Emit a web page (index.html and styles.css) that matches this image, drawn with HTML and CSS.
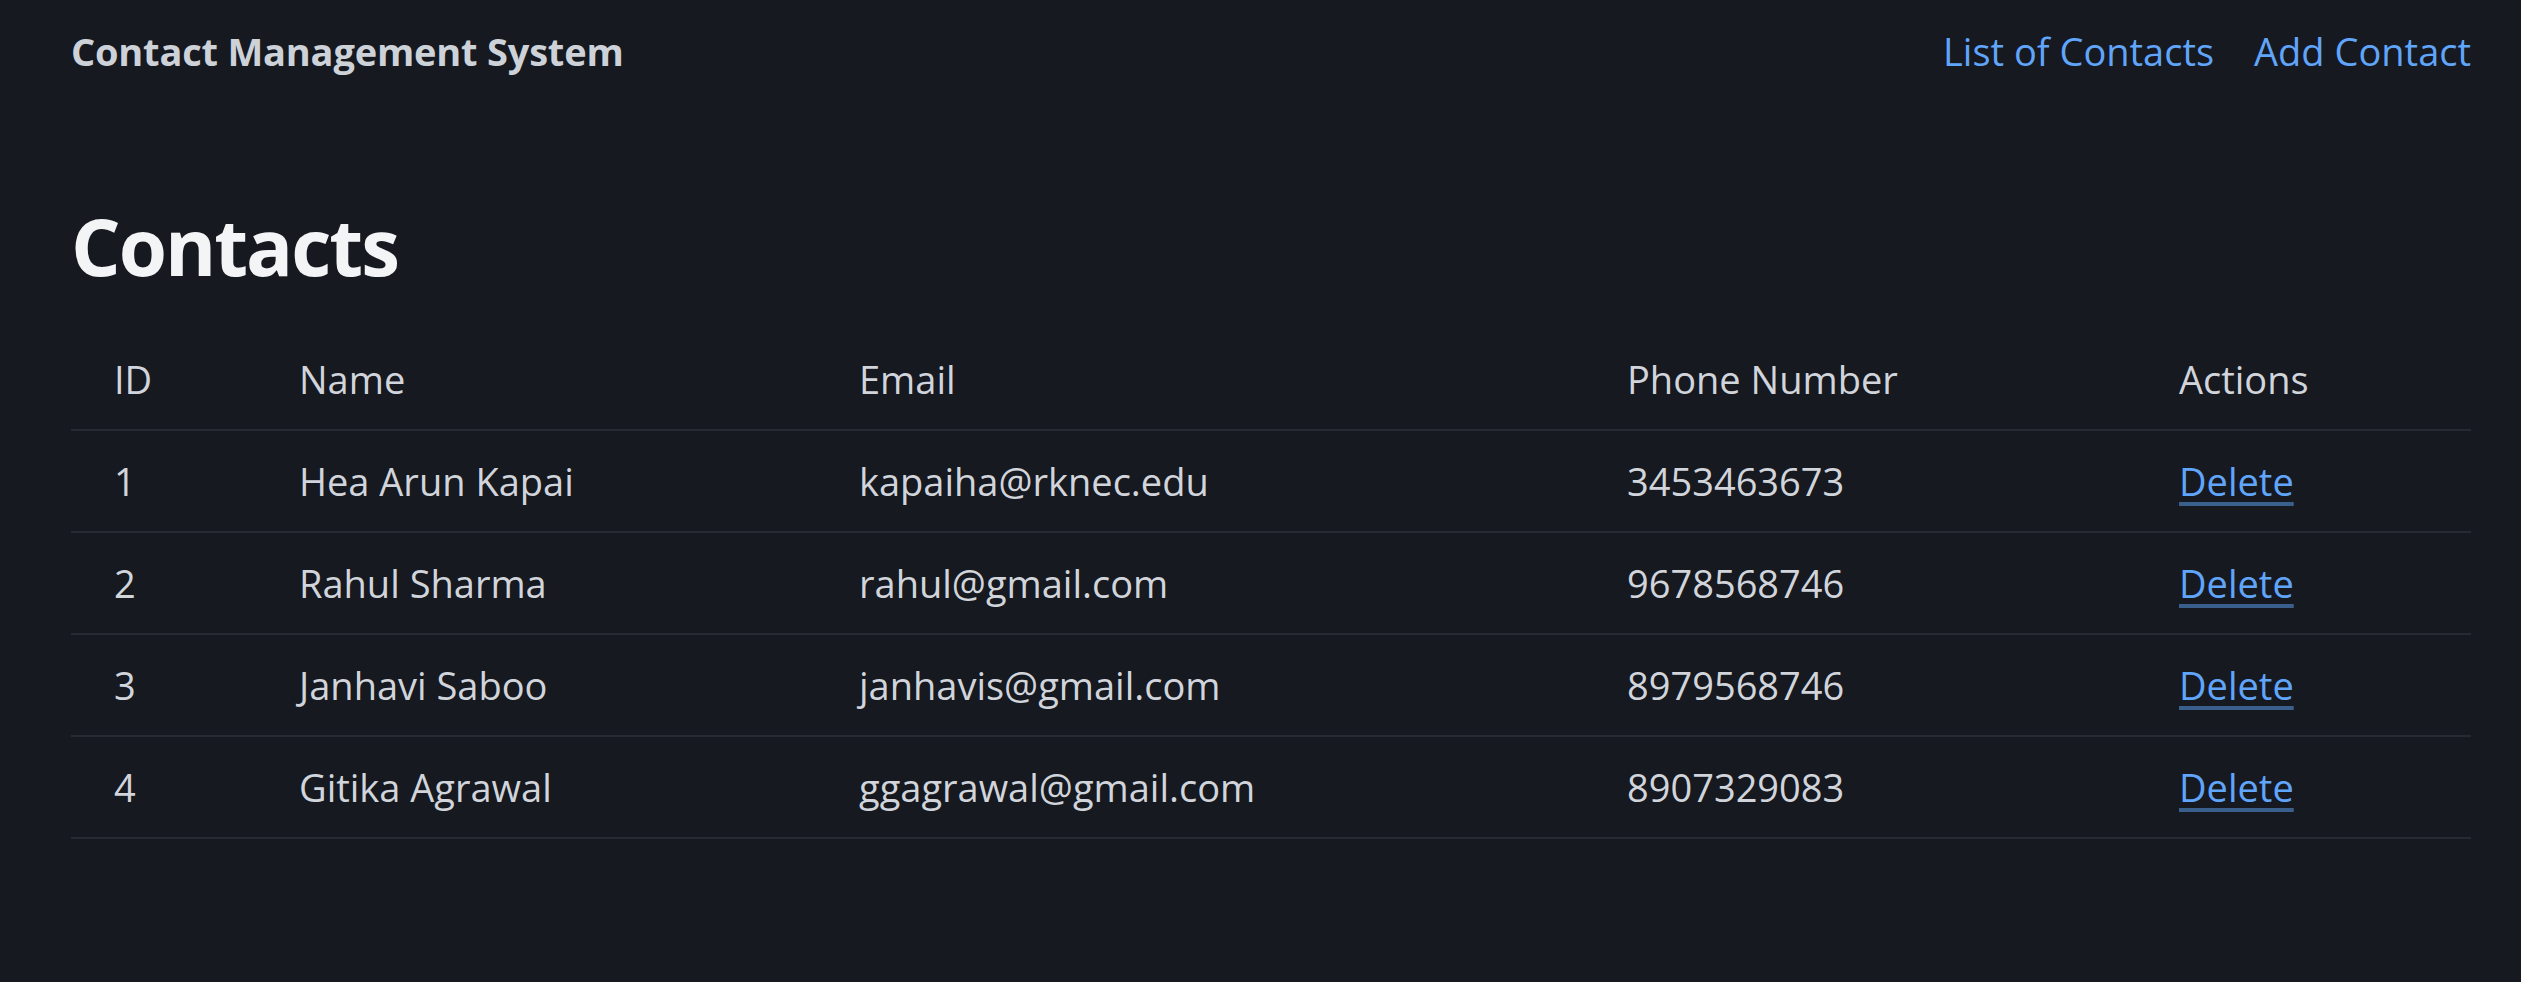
FILE: index.html
```html
<!DOCTYPE html>
<html lang="en">
<head>
<meta charset="utf-8">
<title>Contact Management System</title>
<link rel="stylesheet" href="styles.css">
</head>
<body>
<nav class="navbar">
  <a class="brand" href="#">Contact Management System</a>
  <div class="nav-links">
    <a class="nav-link" href="#">List of Contacts</a>
    <a class="nav-link" href="#">Add Contact</a>
  </div>
</nav>
<main class="container">
  <h1 class="page-title">Contacts</h1>
  <table class="contacts-table">
    <colgroup>
      <col class="col-id">
      <col class="col-name">
      <col class="col-email">
      <col class="col-phone">
      <col class="col-actions">
    </colgroup>
    <thead>
      <tr><th>ID</th><th>Name</th><th>Email</th><th>Phone Number</th><th>Actions</th></tr>
    </thead>
    <tbody>
      <tr><td>1</td><td>Hea Arun Kapai</td><td>kapaiha@rknec.edu</td><td>3453463673</td><td><a class="delete-link" href="#">Delete</a></td></tr>
      <tr><td>2</td><td>Rahul Sharma</td><td>rahul@gmail.com</td><td>9678568746</td><td><a class="delete-link" href="#">Delete</a></td></tr>
      <tr><td>3</td><td>Janhavi Saboo</td><td>janhavis@gmail.com</td><td>8979568746</td><td><a class="delete-link" href="#">Delete</a></td></tr>
      <tr><td>4</td><td>Gitika Agrawal</td><td>ggagrawal@gmail.com</td><td>8907329083</td><td><a class="delete-link" href="#">Delete</a></td></tr>
    </tbody>
  </table>
</main>
</body>
</html>
```
FILE: styles.css
```css
html, body {
  margin: 0;
  background: #161920;
}

body {
  font-family: "Open Sans", "Noto Sans", sans-serif;
  color: #d1d5db;
}

.navbar {
  display: flex;
  justify-content: space-between;
  align-items: center;
  height: 102px;
  padding: 0 50px 0 71px;
}

.brand {
  font-size: 38px;
  font-weight: 700;
  letter-spacing: -0.2px;
  color: #cdd1d8;
  text-decoration: none;
}

.nav-links {
  display: flex;
  gap: 40px;
}

.nav-link {
  font-size: 38px;
  color: #60a5fa;
  text-decoration: none;
}

.container {
  padding: 94px 50px 0 71px;
}

.page-title {
  margin: 0 0 33px;
  font-size: 78px;
  line-height: 100px;
  font-weight: 700;
  letter-spacing: -2px;
  color: #f3f4f6;
}

.contacts-table {
  width: 100%;
  border-collapse: collapse;
  table-layout: fixed;
  font-size: 38px;
}

.col-id { width: 185px; }
.col-name { width: 560px; }
.col-email { width: 768px; }
.col-phone { width: 552px; }

.contacts-table th,
.contacts-table td {
  text-align: left;
  font-weight: 400;
  line-height: 48px;
  padding: 26px 0 26px 43px;
  border-bottom: 2px solid #262a33;
  white-space: nowrap;
}

.contacts-table th {
  color: #d1d5db;
}

.delete-link {
  color: #60a5fa;
  text-decoration: underline;
  text-decoration-color: rgba(96, 165, 250, 0.5);
  text-decoration-thickness: 4px;
  text-underline-offset: 6px;
}
```
